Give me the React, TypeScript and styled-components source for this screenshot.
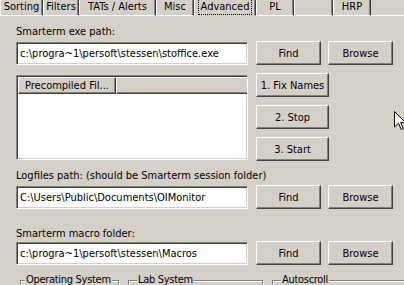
import React from 'react';
import styled, { createGlobalStyle } from 'styled-components';

const GlobalStyle = createGlobalStyle`
  html, body {
    margin: 0;
    padding: 0;
    background: #d4d0c8;
  }
  * {
    box-sizing: border-box;
  }
`;

const tabs = [
  { label: 'Sorting', w: 43 },
  { label: 'Filters', w: 36 },
  { label: 'TATs / Alerts', w: 77 },
  { label: 'Misc', w: 38 },
  { label: 'Advanced', w: 62, active: true },
  { label: 'PL', w: 38 },
  { label: '', w: 39 },
  { label: 'HRP', w: 38 },
];

function App(): React.ReactElement {
  return (
    <Window>
      <GlobalStyle />
      <TabBar>
        {tabs.map((t, i) => (
          <Tab key={i} $w={t.w} $active={t.active}>
            {t.active ? <Focus>{t.label}</Focus> : t.label}
          </Tab>
        ))}
        <TabFiller />
      </TabBar>

      <Panel>
        <Label $top={9}>Smarterm exe path:</Label>
        <Row $top={2}>
          <TextBox readOnly value="c:\progra~1\persoft\stessen\stoffice.exe" />
          <Button $w={65}>Find</Button>
          <Button $w={65}>Browse</Button>
        </Row>

        <ListRow>
          <ListBox>
            <ListHeader>
              <HeaderCell>Precompiled Fil...</HeaderCell>
              <HeaderRest />
            </ListHeader>
          </ListBox>
          <ButtonColumn>
            <Button $w={73}>1. Fix Names</Button>
            <Button $w={73}>2. Stop</Button>
            <Button $w={73}>3. Start</Button>
          </ButtonColumn>
        </ListRow>

        <Label $top={8}>Logfiles path: (should be Smarterm session folder)</Label>
        <Row $top={2}>
          <TextBox readOnly value="C:\Users\Public\Documents\OIMonitor" />
          <Button $w={65}>Find</Button>
          <Button $w={65}>Browse</Button>
        </Row>

        <Label $top={18}>Smarterm macro folder:</Label>
        <Row $top={0}>
          <TextBox readOnly value="c:\progra~1\persoft\stessen\Macros" />
          <Button $w={65}>Find</Button>
          <Button $w={65}>Browse</Button>
        </Row>

        <Groups>
          <GroupBox $w={99} $inset={4}>
            <legend>Operating System</legend>
          </GroupBox>
          <GroupBox $w={135} $inset={8}>
            <legend>Lab System</legend>
          </GroupBox>
          <GroupBox $w={150} $inset={8}>
            <legend>Autoscroll</legend>
          </GroupBox>
        </Groups>
      </Panel>

      <Cursor width="12" height="20" viewBox="0 0 12 20">
        <polygon
          points="0.5,0.5 0.5,16 4.5,12.2 7.2,18.5 9.3,17.6 6.7,11.5 11.5,11.5"
          fill="#fff"
          stroke="#000"
          strokeWidth="1"
        />
      </Cursor>
    </Window>
  );
}

export default App;

const Window = styled.div`
  position: relative;
  width: 404px;
  height: 285px;
  overflow: hidden;
  background: #d4d0c8;
  font-family: 'DejaVu Sans Condensed', 'Liberation Sans', sans-serif;
  font-size: 11px;
  color: #000;
`;

const TabBar = styled.div`
  display: flex;
  align-items: flex-end;
  height: 16px;
`;

const Tab = styled.div<{ $w: number; $active?: boolean }>`
  display: flex;
  align-items: center;
  justify-content: center;
  width: ${(p) => p.$w}px;
  height: 16px;
  padding-bottom: ${(p) => (p.$active ? 1 : 2)}px;
  border-left: 1px solid #fff;
  border-right: 1px solid #404040;
  border-bottom: ${(p) => (p.$active ? '1px solid #d4d0c8' : '1px solid #fff')};
  box-shadow: inset -1px 0 0 #808080;
  white-space: nowrap;
`;

const Focus = styled.span`
  padding: 0 2px;
  outline: 1px dotted #000;
  line-height: 14px;
`;

const TabFiller = styled.div`
  flex: 1;
  height: 16px;
  border-bottom: 1px solid #fff;
`;

const Panel = styled.div`
  display: flex;
  flex-direction: column;
  padding-left: 16px;
`;

const Label = styled.div<{ $top: number }>`
  margin-top: ${(p) => p.$top}px;
  height: 14px;
  line-height: 14px;
  white-space: nowrap;
`;

const Row = styled.div<{ $top: number }>`
  display: flex;
  align-items: center;
  gap: 7px;
  height: 24px;
  margin-top: ${(p) => p.$top}px;
`;

const TextBox = styled.input`
  width: 232px;
  height: 23px;
  margin: 0 1px 0 0;
  padding: 0 0 0 3px;
  font: inherit;
  color: #000;
  background: #fff;
  border-top: 1px solid #808080;
  border-left: 1px solid #808080;
  border-bottom: 1px solid #fff;
  border-right: 1px solid #fff;
  box-shadow: inset 1px 1px 0 #404040, inset -1px -1px 0 #d4d0c8;
  outline: none;
`;

const Button = styled.div<{ $w: number }>`
  display: flex;
  align-items: center;
  justify-content: center;
  width: ${(p) => p.$w}px;
  height: 24px;
  background: #d4d0c8;
  border-top: 1px solid #fff;
  border-left: 1px solid #fff;
  border-bottom: 1px solid #404040;
  border-right: 1px solid #404040;
  box-shadow: inset -1px -1px 0 #808080;
  white-space: nowrap;
`;

const ListRow = styled.div`
  display: flex;
  align-items: flex-start;
  gap: 8px;
  margin-top: 8px;
`;

const ListBox = styled.div`
  width: 232px;
  height: 85px;
  margin-top: 2px;
  background: #fff;
  border-top: 1px solid #808080;
  border-left: 1px solid #808080;
  border-bottom: 1px solid #fff;
  border-right: 1px solid #fff;
  box-shadow: inset 1px 1px 0 #404040, inset -1px -1px 0 #d4d0c8;
  padding: 1px 0 0 1px;
`;

const ListHeader = styled.div`
  display: flex;
  height: 17px;
`;

const HeaderCell = styled.div`
  width: 98px;
  height: 17px;
  line-height: 15px;
  padding-left: 6px;
  background: #d4d0c8;
  border-top: 1px solid #fff;
  border-left: 1px solid #fff;
  border-bottom: 1px solid #404040;
  border-right: 1px solid #404040;
  box-shadow: inset -1px -1px 0 #808080;
  white-space: nowrap;
`;

const HeaderRest = styled.div`
  flex: 1;
  height: 17px;
  background: #d4d0c8;
  border-top: 1px solid #fff;
  border-left: 1px solid #fff;
  border-bottom: 1px solid #404040;
  box-shadow: inset 0 -1px 0 #808080;
`;

const ButtonColumn = styled.div`
  display: flex;
  flex-direction: column;
  gap: 8px;
`;

const Groups = styled.div`
  display: flex;
  gap: 9px;
  margin-top: 8px;
  padding-left: 4px;
`;

const GroupBox = styled.fieldset<{ $w: number; $inset: number }>`
  flex: none;
  width: ${(p) => p.$w}px;
  min-width: 0;
  height: 40px;
  margin: 0;
  padding: 0 ${(p) => p.$inset}px;
  border: 1px solid #808080;
  box-shadow: inset 1px 1px 0 #fff, 1px 1px 0 #fff;

  legend {
    padding: 0 1px;
    margin-left: 0;
    line-height: 14px;
    white-space: nowrap;
    letter-spacing: -0.3px;
    background: #d4d0c8;
  }
`;

const Cursor = styled.svg`
  position: absolute;
  left: 394px;
  top: 111px;
`;
